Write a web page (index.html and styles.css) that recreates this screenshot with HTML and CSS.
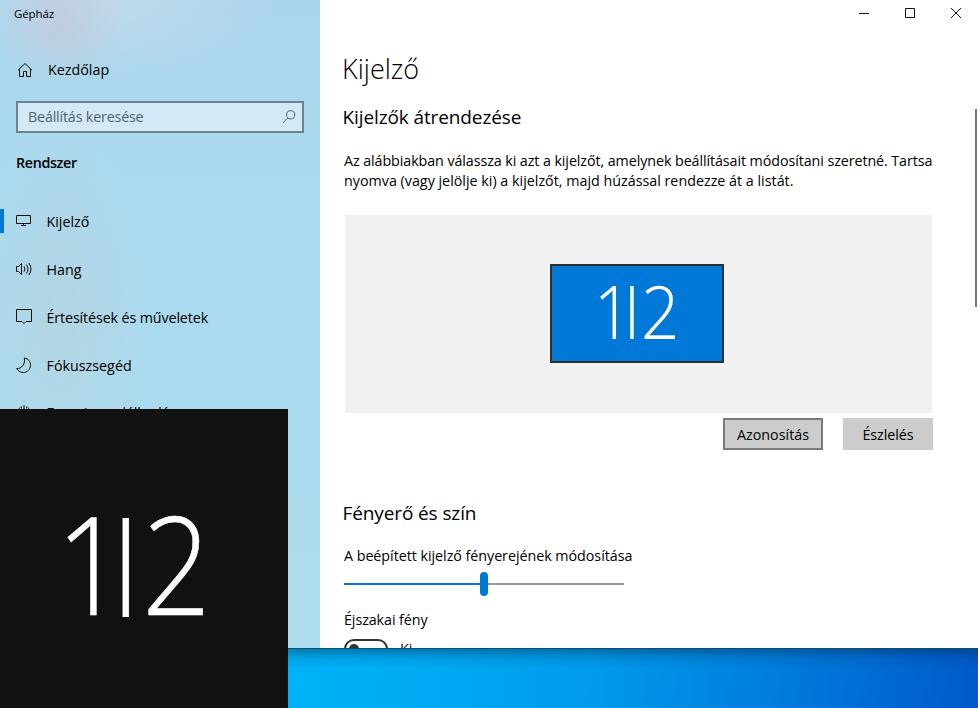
FILE: index.html
```html
<!DOCTYPE html>
<html lang="hu">
<head>
<meta charset="utf-8">
<title>Gépház</title>
<link rel="stylesheet" href="styles.css">
</head>
<body>
<div class="desktop">
  <div class="window">
    <aside class="sidebar">
      <div class="app-title">Gépház</div>
      <div class="home">
        <svg class="icon" width="18" height="18" viewBox="0 0 18 18"><path d="M2 9.300 9 2.500l7 6.800M3.500 8.200v7.300h4v-5h3v5h4V8.200"/></svg>
        <span>Kezdőlap</span>
      </div>
      <div class="search">
        <span>Beállítás keresése</span>
        <svg class="icon glass" width="16" height="16" viewBox="0 0 16 16"><circle cx="10.700" cy="5.800" r="4.100"/><path d="M7.800 8.900 2.800 14"/></svg>
      </div>
      <h2 class="section">Rendszer</h2>
      <nav class="nav">
        <a class="item active"><svg class="icon" width="18" height="18" viewBox="0 0 18 18"><path d="M1.500 2.500h14v8h-14zM8.500 10.500v2M6 12.500h5"/></svg><span>Kijelző</span></a>
        <a class="item"><svg class="icon" width="18" height="18" viewBox="0 0 18 18"><path d="M1.500 5.500h2l3-3v11l-3-3h-2zM9 5.300q1.800 2.700 0 5.400M11.400 3.500q3.200 4.500 0 9M13.900 2q4.200 6 0 12"/></svg><span>Hang</span></a>
        <a class="item notify"><svg class="icon" width="18" height="18" viewBox="0 0 18 18"><path d="M1.500 1.500h15v12H11l-2 2-2-2H1.500z"/></svg><span>Értesítések és műveletek</span></a>
        <a class="item"><svg class="icon" width="18" height="18" viewBox="0 0 18 18"><path d="M9.300 1c3.900.6 6.500 3.600 6.200 7.600-.3 4-3.400 6.900-7.200 6.900-2.900 0-5.300-1.500-6.600-3.900 4.900.3 9-4.800 7.600-10.600z"/></svg><span>Fókuszsegéd</span></a>
        <a class="item power"><svg class="icon" width="18" height="18" viewBox="0 0 18 18"><path d="M9 1v8M6.500 2.500v2M11.500 2.500v2M5.500 3.300a6.500 6.500 0 1 0 7 0"/></svg><span>Energiagazdálkodás</span></a>
      </nav>
    </aside>
    <main class="content">
      <div class="caption">
        <svg class="icon" width="46" height="26" viewBox="0 0 46 26"><path d="M18 13.500h10"/></svg>
        <svg class="icon" width="46" height="26" viewBox="0 0 46 26"><path d="M18.500 8.500h9v9h-9z"/></svg>
        <svg class="icon" width="46" height="26" viewBox="0 0 46 26"><path d="m18 8 10 10M28 8 18 18"/></svg>
      </div>
      <div class="page">
        <h1>Kijelző</h1>
        <h2 class="arrange">Kijelzők átrendezése</h2>
        <p class="intro"><span class="line-a">Az alábbiakban válassza ki azt a kijelzőt, amelynek beállításait módosítani szeretné. Tartsa</span><br><span>nyomva (vagy jelölje ki) a kijelzőt, majd húzással rendezze át a listát.</span></p>
        <div class="stage"><div class="monitor"><div class="num small"><span>1</span><i>|</i><span>2</span></div></div></div>
        <div class="buttons">
          <button class="btn focus">Azonosítás</button>
          <button class="btn detect">Észlelés</button>
        </div>
        <h2 class="bright">Fényerő és szín</h2>
        <div class="label">A beépített kijelző fényerejének módosítása</div>
        <div class="slider"><div class="fill"></div><div class="thumb"></div><div class="rest"></div></div>
        <div class="label night">Éjszakai fény</div>
        <div class="toggle-row"><div class="toggle"><b></b></div><span>Ki</span></div>
      </div>
      <div class="scrollbar"></div>
    </main>
  </div>
  <div class="wallpaper"></div>
  <div class="identify"><div class="num"><span>1</span><i>|</i><span>2</span></div></div>
</div>
</body>
</html>
```
FILE: styles.css
```css
* { box-sizing: border-box; }
body { margin: 0; font: 14.3px/20px "Open Sans", "Noto Sans", sans-serif; color: #000; }
h1, h2, p { margin: 0; font-weight: 400; }
.desktop { position: relative; width: 978px; height: 708px; overflow: hidden; display: flex; flex-direction: column; }
.icon { fill: none; stroke: #111; stroke-width: 1; flex: none; }
.window { height: 649px; display: flex; border-bottom: 1px solid #174c68; overflow: hidden; flex: none; }

.sidebar {
  width: 320px; flex: none; white-space: nowrap;
  background:
    radial-gradient(ellipse 65px 60px at 60px 24px, rgba(203,190,204,.42), rgba(203,190,204,.2) 50%, rgba(206,190,204,0)),
    radial-gradient(ellipse 170px 85px at 110px 0, rgba(198,218,236,.8), rgba(198,218,236,.4) 50%, rgba(198,218,236,0)),
    radial-gradient(ellipse 90px 190px at 60px 310px, rgba(186,209,222,.6), rgba(186,209,222,0)),
    linear-gradient(#abd5ec, #aadaee 30%, #abdbee 70%, #addcee);
}
.app-title { height: 28px; padding: 4px 0 0 14px; font-size: 11.500px; letter-spacing: -.11px; }
.home { height: 72px; display: flex; align-items: center; gap: 14px; padding: 12px 0 0 16px; }
.search { margin: 1px 16px 0; height: 32px; border: 2px solid #6c838f; background: rgba(239,245,252,.6); display: flex; align-items: center; justify-content: space-between; padding: 0 6px 0 10px; color: #52636d; letter-spacing: -.18px; }
.glass { stroke: #52636d; }
.section { padding: 20px 0 0 16px; font-size: 14.3px; font-weight: 600; letter-spacing: -.35px; }
.nav { margin-top: 24px; }
.item { height: 48px; display: flex; align-items: center; gap: 13.5px; padding: 1px 0 0 15px; }
.item span { padding-top: 1px; }
.notify { letter-spacing: -.125px; }
.notify .icon { margin-top: -2px; }
.power { letter-spacing: -.15px; padding-top: 0; }
.power span { padding-top: 0; }
.active { position: relative; }
.active::before { content: ""; position: absolute; left: 0; top: 12px; width: 4px; height: 24px; background: #0078d7; }

.content { flex: 1; background: #fff; position: relative; }
.caption { display: flex; justify-content: flex-end; height: 26px; margin-right: -1px; }
.page { padding: 24px 45px 0 24px; width: 658px; }
h1 { font-size: 27px; line-height: 38px; font-weight: 300; margin-left: -2px; }
h2.arrange, h2.bright { font-size: 19px; line-height: 26px; margin-left: -1.500px; letter-spacing: -.11px; }
.arrange { margin-top: 16px; }
.intro { margin-top: 21px; height: 64px; white-space: nowrap; }
.line-a { letter-spacing: -.086px; }
.stage { width: 587px; height: 198px; margin-left: 1px; background: #f1f1f1; display: flex; padding: 49px 0 0 205px; }
.monitor { width: 174px; height: 99px; border: 2px solid #2f2f2f; background: #0078d7; }
.buttons { display: flex; justify-content: flex-end; gap: 20px; margin-top: 5px; width: 589px; }
.btn { width: 100px; height: 32px; border: 0; padding: 1px 0 0; background: #ccc; font: inherit; color: #000; }
.focus { border: 2px solid #7a7a7a; }
.detect { width: 90px; letter-spacing: -.07px; }
.bright { margin-top: 50px; }
.label { margin-top: 20px; letter-spacing: -.04px; }
.slider { width: 280px; height: 24px; margin-top: 6px; display: flex; align-items: center; }
.fill { width: 136px; height: 2px; background: #0078d7; }
.thumb { width: 8px; height: 24px; border-radius: 4px; background: #0078d7; }
.rest { flex: 1; height: 2px; background: #999; }
.night { margin-top: 14px; letter-spacing: -.08px; }
.toggle-row { display: flex; gap: 12px; margin-top: 9px; }
.toggle { width: 44px; height: 20px; border: 2px solid #333; border-radius: 10px; padding: 3px; }
.toggle b { display: block; width: 10px; height: 10px; border-radius: 5px; background: #333; }
.scrollbar { position: absolute; right: 1px; top: 109px; width: 2px; height: 198px; background: #7a7a7a; }

.wallpaper { flex: 1; background: linear-gradient(rgba(0,40,70,.38), rgba(0,40,70,.1) 10px, transparent 20px), linear-gradient(97deg, #00b2f8 30%, #00adf5 40%, #009bec 60%, #007bdc 80%, #0059c8); }

.identify { position: absolute; left: 0; top: 409px; width: 288px; height: 299px; background: #111; }
.num { display: grid; grid-template-columns: 60px 20px 80px; padding: 104px 0 0 56px; color: #fff; font-size: 136px; font-weight: 300; line-height: 99px; -webkit-text-stroke: .5px #fff; }
.num i { font-style: normal; overflow: hidden; height: 99px; display: flex; justify-content: center; margin-top: 5px; }
.num span { transform: scaleX(.89); transform-origin: 0 0; }
.num span:last-child { transform: translateX(6px) scaleX(.89); }
.num.small { font-size: 74px; line-height: 53px; grid-template-columns: 32px 12px 40px; padding: 18px 0 0 42px; -webkit-text-stroke-width: .2px; }
.num.small i { height: 53px; margin-top: 2px; }
.num.small span:last-child { transform: translateX(3px) scaleX(.91); }
```
